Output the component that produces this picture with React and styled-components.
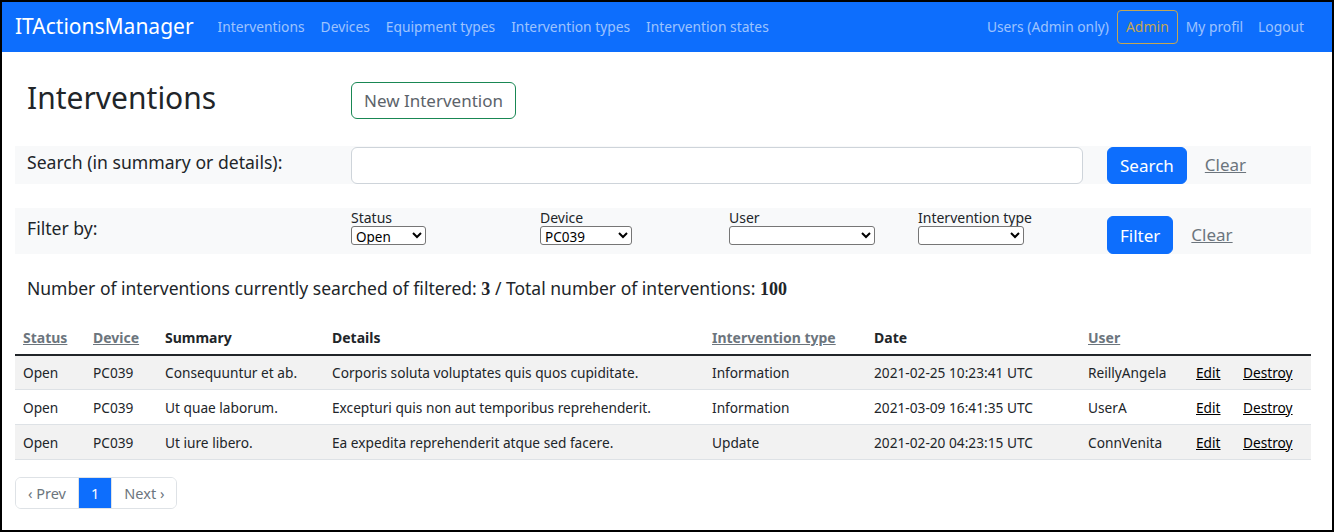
import styled, { createGlobalStyle } from "styled-components";

const GlobalStyle = createGlobalStyle`
  html, body {
    margin: 0;
    padding: 0;
    background: #fff;
  }
  body {
    font-family: "Noto Sans", "Liberation Sans", Arial, sans-serif;
    color: #212529;
    line-height: 1.4;
  }
  * {
    box-sizing: border-box;
  }
`;

const rows = [
  {
    status: "Open",
    device: "PC039",
    summary: "Consequuntur et ab.",
    details: "Corporis soluta voluptates quis quos cupiditate.",
    type: "Information",
    date: "2021-02-25 10:23:41 UTC",
    user: "ReillyAngela",
  },
  {
    status: "Open",
    device: "PC039",
    summary: "Ut quae laborum.",
    details: "Excepturi quis non aut temporibus reprehenderit.",
    type: "Information",
    date: "2021-03-09 16:41:35 UTC",
    user: "UserA",
  },
  {
    status: "Open",
    device: "PC039",
    summary: "Ut iure libero.",
    details: "Ea expedita reprehenderit atque sed facere.",
    type: "Update",
    date: "2021-02-20 04:23:15 UTC",
    user: "ConnVenita",
  },
];

const columns = [
  { label: "Status", width: 70, sortable: true },
  { label: "Device", width: 72, sortable: true },
  { label: "Summary", width: 167 },
  { label: "Details", width: 380 },
  { label: "Intervention type", width: 162, sortable: true },
  { label: "Date", width: 214 },
  { label: "User", width: 108, sortable: true },
  { label: "", width: 47 },
  { label: "", width: 76 },
];

const filters = [
  { label: "Status", value: "Open", width: 75 },
  { label: "Device", value: "PC039", width: 92 },
  { label: "User", value: "", width: 146 },
  { label: "Intervention type", value: "", width: 106 },
];

export default function App() {
  return (
    <>
      <GlobalStyle />
      <Frame>
        <Navbar>
          <Brand href="#">ITActionsManager</Brand>
          <NavList>
            <NavLink href="#">Interventions</NavLink>
            <NavLink href="#">Devices</NavLink>
            <NavLink href="#">Equipment types</NavLink>
            <NavLink href="#">Intervention types</NavLink>
            <NavLink href="#">Intervention states</NavLink>
          </NavList>
          <NavRight>
            <NavLink href="#">Users (Admin only)</NavLink>
            <AdminBadge>Admin</AdminBadge>
            <NavLink href="#">My profil</NavLink>
            <NavLink href="#">Logout</NavLink>
          </NavRight>
        </Navbar>

        <Main>
          <HeaderRow>
            <Cell>
              <Title>Interventions</Title>
            </Cell>
            <Cell>
              <OutlineButton>New Intervention</OutlineButton>
            </Cell>
          </HeaderRow>

          <SearchRow>
            <Cell>
              <RowLabel>Search (in summary or details):</RowLabel>
            </Cell>
            <Cell>
              <SearchInput type="text" />
            </Cell>
            <ActionCell>
              <PrimaryButton>Search</PrimaryButton>
              <ClearLink href="#">Clear</ClearLink>
            </ActionCell>
          </SearchRow>

          <FilterRow>
            <Cell>
              <RowLabel>Filter by:</RowLabel>
            </Cell>
            <FilterGrid>
              {filters.map((f) => (
                <FilterField key={f.label}>
                  <FilterLabel>{f.label}</FilterLabel>
                  <Select $width={f.width} defaultValue={f.value}>
                    <option value={f.value}>{f.value}</option>
                  </Select>
                </FilterField>
              ))}
            </FilterGrid>
            <ActionCell>
              <PrimaryButton $filter>Filter</PrimaryButton>
              <ClearLink href="#" $filter>
                Clear
              </ClearLink>
            </ActionCell>
          </FilterRow>

          <Count>
            Number of interventions currently searched of filtered: <b>3</b> / Total
            number of interventions: <b>100</b>
          </Count>

          <Table>
            <colgroup>
              {columns.map((c, i) => (
                <col key={i} style={{ width: c.width }} />
              ))}
            </colgroup>
            <thead>
              <tr>
                {columns.map((c, i) => (
                  <Th key={i}>
                    {c.sortable ? <SortLink href="#">{c.label}</SortLink> : c.label}
                  </Th>
                ))}
              </tr>
            </thead>
            <tbody>
              {rows.map((r, i) => (
                <Tr key={i} $striped={i % 2 === 0}>
                  <Td>{r.status}</Td>
                  <Td>{r.device}</Td>
                  <Td>{r.summary}</Td>
                  <Td>{r.details}</Td>
                  <Td>{r.type}</Td>
                  <Td>{r.date}</Td>
                  <Td>{r.user}</Td>
                  <Td>
                    <ActionLink href="#">Edit</ActionLink>
                  </Td>
                  <Td>
                    <ActionLink href="#">Destroy</ActionLink>
                  </Td>
                </Tr>
              ))}
            </tbody>
          </Table>

          <Pagination>
            <PageItem $disabled>‹ Prev</PageItem>
            <PageItem $active>1</PageItem>
            <PageItem $disabled>Next ›</PageItem>
          </Pagination>
        </Main>
      </Frame>
    </>
  );
}

const Frame = styled.div`
  height: 532px;
  border: 2px solid #000;
  overflow: hidden;
  background: #fff;
`;

const Navbar = styled.nav`
  height: 50px;
  background: #0d6efd;
  display: flex;
  align-items: center;
  padding: 0 28px 0 13px;
`;

const Brand = styled.a`
  color: #fff;
  font-size: 21px;
  text-decoration: none;
  margin-right: 24px;
`;

const NavList = styled.div`
  display: flex;
  gap: 16px;
`;

const NavLink = styled.a`
  color: rgba(255, 255, 255, 0.6);
  font-size: 13.8px;
  text-decoration: none;
  white-space: nowrap;
`;

const NavRight = styled.div`
  margin-left: auto;
  display: flex;
  align-items: center;
  gap: 8px;

  & > a:last-child {
    margin-left: 7px;
  }
`;

const AdminBadge = styled.span`
  color: #c4a654;
  border: 1px solid #c4a654;
  border-radius: 4px;
  font-size: 14px;
  height: 34px;
  padding: 0 8px;
  display: flex;
  align-items: center;
`;

const Main = styled.main`
  padding: 0 21px 0 13px;
`;

const Grid = styled.div`
  display: grid;
  grid-template-columns: 324px 756px 1fr;
  align-items: center;
`;

const HeaderRow = styled(Grid)`
  margin-top: 30px;
  height: 37px;
`;

const Cell = styled.div`
  padding: 0 12px;
`;

const Title = styled.h1`
  margin: -5px 0 0;
  font-size: 30px;
  line-height: 1.2;
  font-weight: 400;
  color: #212529;
`;

const OutlineButton = styled.button`
  font-family: inherit;
  font-size: 17px;
  color: #5c636a;
  background: #fff;
  border: 1px solid #198754;
  border-radius: 6px;
  height: 37px;
  padding: 0 12px;
`;

const SearchRow = styled(Grid)`
  margin-top: 27px;
  height: 38px;
  background: #f8f9fa;
`;

const RowLabel = styled.div`
  font-size: 17.6px;
  color: #212529;
  margin-top: -6px;
`;

const SearchInput = styled.input`
  width: 100%;
  height: 37px;
  border: 1px solid #ced4da;
  border-radius: 6px;
  background: #fff;
  display: block;
`;

const ActionCell = styled.div`
  padding: 0 12px;
  display: flex;
  align-items: center;
`;

const PrimaryButton = styled.button`
  font-family: inherit;
  font-size: 17px;
  line-height: 1;
  color: #fff;
  background: #0d6efd;
  border: 1px solid #0d6efd;
  border-radius: 6px;
  height: ${(p) => (p.$filter ? "38px" : "37px")};
  padding: 0 12px;
  margin-top: ${(p) => (p.$filter ? "8px" : "0")};
`;

const ClearLink = styled.a`
  color: #6c757d;
  font-size: 17px;
  margin-left: 18px;
  margin-top: ${(p) => (p.$filter ? "8px" : "0")};
`;

const FilterRow = styled(Grid)`
  margin-top: 24px;
  height: 46px;
  background: #f8f9fa;
`;

const FilterGrid = styled.div`
  display: grid;
  grid-template-columns: repeat(4, 189px);
  padding: 0 0 0 12px;
  margin-top: -8px;
`;

const FilterField = styled.div`
  display: flex;
  flex-direction: column;
  align-items: flex-start;
`;

const FilterLabel = styled.label`
  font-size: 14px;
  color: #212529;
  line-height: 17px;
`;

const Select = styled.select`
  width: ${(p) => p.$width}px;
  height: 19px;
  font-family: inherit;
  font-size: 13.5px;
  line-height: 15px;
  color: #000;
  background: #fff;
  border: 1px solid #767676;
  border-radius: 3px;
  padding: 0;
`;

const Count = styled.p`
  margin: 22px 0 0 12px;
  font-size: 17.5px;
  color: #212529;

  b {
    font-family: "Liberation Serif", serif;
    font-size: 18px;
  }
`;

const Table = styled.table`
  margin-top: 20px;
  width: 100%;
  border-collapse: collapse;
  table-layout: fixed;
  font-size: 13.7px;
`;

const Th = styled.th`
  text-align: left;
  padding: 6px 8px 6px;
  height: 31px;
  font-size: 14px;
  font-weight: 700;
  color: #212529;
  border-bottom: 2px solid #212529;
  white-space: nowrap;
`;

const SortLink = styled.a`
  color: #6c757d;
`;

const Tr = styled.tr`
  background: ${(p) => (p.$striped ? "#f2f2f2" : "#fff")};
`;

const Td = styled.td`
  padding: 0 8px;
  height: 35px;
  border-bottom: 1px solid #dee2e6;
  color: #212529;
  white-space: nowrap;
`;

const ActionLink = styled.a`
  color: #000;
`;

const Pagination = styled.div`
  display: inline-flex;
  margin-top: 17px;
  border: 1px solid #dee2e6;
  border-radius: 6px;
  overflow: hidden;
  font-size: 14.5px;
`;

const PageItem = styled.span`
  height: 30px;
  display: flex;
  align-items: center;
  padding: 0 12px;
  color: ${(p) => (p.$active ? "#fff" : "#6c757d")};
  background: ${(p) => (p.$active ? "#0d6efd" : "#fff")};
  & + & {
    border-left: 1px solid #dee2e6;
  }
`;
